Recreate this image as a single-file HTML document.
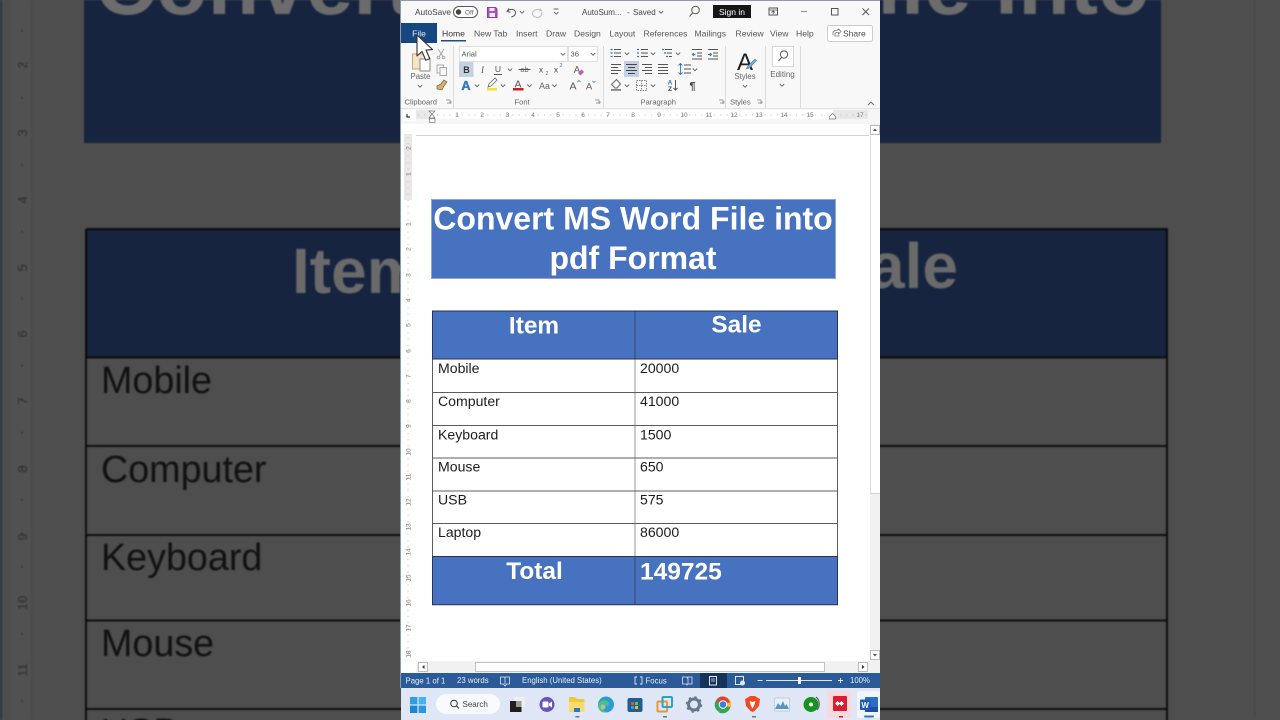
<!DOCTYPE html>
<html><head><meta charset="utf-8"><title>Convert MS Word File into pdf Format</title>
<style>
html,body{margin:0;padding:0;width:1280px;height:720px;overflow:hidden;background:#4d4d4d}
svg{display:block;position:absolute;left:0;top:0;filter:blur(.3px)}
text{font-family:"Liberation Sans",Arial,sans-serif}
.u{font-size:8.5px;fill:#444}
.t{font-size:8.6px;fill:#555}
.s{font-size:7.8px;fill:#e8eef7}
.g{font-size:7.6px;fill:#666}
.r{font-size:6.5px;fill:#777;text-anchor:middle}
.d{font-size:14.1px;fill:#1c1c1c}
.h{font-size:24.4px;fill:#fff;font-weight:bold;text-anchor:middle}
.bt{font-size:37.7px;fill:#111}
.ln{stroke:#6b6b6b;stroke-width:1;fill:none}
.ch{stroke:#666;stroke-width:.9;fill:none}
.b{stroke:#555;stroke-width:1;fill:none}
.bl{stroke:#4a87b8;stroke-width:1;fill:none}
</style></head><body>
<svg width="1280" height="720" viewBox="0 0 1280 720" xmlns="http://www.w3.org/2000/svg">
<defs><path id="c" class="ch" d="M-2.2-1 0 1.2 2.2-1"/></defs>

<!-- dim background -->
<rect width="1280" height="720" fill="#4e4e4e"/>
<g style="filter:blur(.7px)">
<rect x="0" y="0" width="2" height="720" fill="#2b383e"/>
<rect x="11" y="0" width="21" height="720" fill="#515151"/>
<rect x="31" y="0" width="1" height="720" fill="#494949"/>
<rect x="1254" y="0" width="1" height="716" fill="#424242"/>
<g font-size="13" fill="#2e2e2e" text-anchor="middle">
<text transform="translate(27,65) rotate(-90)">2</text><text transform="translate(27,133) rotate(-90)">3</text><text transform="translate(27,200) rotate(-90)">4</text><text transform="translate(27,268) rotate(-90)">5</text><text transform="translate(27,334) rotate(-90)">6</text><text transform="translate(27,401) rotate(-90)">7</text><text transform="translate(27,469) rotate(-90)">8</text><text transform="translate(27,537) rotate(-90)">9</text><text transform="translate(27,603) rotate(-90)">10</text><text transform="translate(27,670) rotate(-90)">11</text>
</g>
<path d="M22 30V720" stroke="#2e2e2e" stroke-width="1.5" stroke-dasharray="1.5 32" fill="none"/>
<rect x="84" y="0" width="1077" height="143" fill="#17243f"/>
<text x="95" y="14" font-size="84.5" font-weight="bold" fill="#6c6c6c">Convert MS Word File into</text>
<rect x="86" y="229" width="1081" height="128" fill="#17243f"/>
<text x="292" y="293" font-size="64" font-weight="bold" fill="#6a6a6a">Item</text>
<text x="958" y="288" font-size="64" font-weight="bold" fill="#6a6a6a" text-anchor="end">Sale</text>
<path d="M86 229H1167V730M86 229V730M86 357.500H1167M86 446H1167M86 535H1167M86 620.500H1167M86 709H1167" stroke="#060606" stroke-width="1.800" fill="none"/>
<text class="bt" x="101" y="393">Mobile</text>
<text class="bt" x="101" y="482">Computer</text>
<text class="bt" x="101" y="570">Keyboard</text>
<text class="bt" x="101" y="656">Mouse</text>
<text class="bt" x="101" y="745">USB</text>
</g>

<!-- window -->
<rect x="401" y="0" width="479" height="720" fill="#fff"/>
<rect x="400" y="0" width="1" height="688" fill="#8d99a8"/>
<rect x="401" y="0" width="479" height="1" fill="#8f9aa6"/>
<rect x="401" y="1" width="479" height="107" fill="#f8f8f8"/>

<!-- title bar -->
<text class="u" x="415" y="15" style="font-size:8.300px">AutoSave</text>
<rect x="453.500" y="6.500" width="24" height="11" rx="5.500" fill="#fff" stroke="#555"/>
<circle cx="458.500" cy="12" r="2.700" fill="#444"/>
<text x="465" y="14.600" font-size="6.500" fill="#666">Off</text>
<path d="M487.500 7.500h8l1.500 1.500v8.500h-9.500z" fill="#a656b9" stroke="#8c3fa3"/><rect x="489.500" y="8" width="5" height="3" fill="#f3e6f6"/><rect x="489.500" y="13" width="5.500" height="4" fill="#f3e6f6"/>
<path d="M509 8.500 507 11.500l3.500.7M507.500 11c3-3 8-1.500 8 1.800 0 2.400-2 3.700-4.200 4.200" class="b"/>
<use href="#c" x="522" y="12"/>
<path d="M540 8.500 541.800 11M541 11c-3-3-8.500-1-8.500 2.500 0 3 4 4.700 7 3.500 2-1 2.500-3 2-4.500" stroke="#b9b9b9" fill="none"/>
<path d="M553.500 9h5M554 12l2.200 2.200 2.200-2.200" class="ch"/>
<text class="u" x="582" y="15" style="font-size:8px">AutoSum...</text><text class="u" x="627" y="15" style="font-size:8px">-</text><text class="u" x="633" y="15" style="font-size:8px">Saved</text>
<use href="#c" x="661" y="12"/>
<circle cx="695.500" cy="10" r="3.800" class="b"/><path d="M692.500 13l-3 3.500" class="b"/>
<rect x="713" y="5" width="38" height="13" fill="#161616"/>
<text x="732" y="15" font-size="8.500" fill="#fff" text-anchor="middle">Sign in</text>
<rect x="769" y="8" width="8.500" height="7" class="b"/><path d="M769 10h8.500M773.200 14v-3M771.500 12.500l1.700-1.700 1.700 1.700" stroke="#555" stroke-width=".8" fill="none"/>
<path d="M801 11.500h6" stroke="#999" stroke-width="1.200"/>
<rect x="831.500" y="8.500" width="6.500" height="6.500" class="b"/>
<path d="M862.500 8.500l6.500 6.500M869 8.500l-6.500 6.500" class="b"/>

<!-- tabs -->
<rect x="401" y="23" width="36" height="20" fill="#17477f"/>
<text x="419" y="36.500" font-size="8.500" fill="#e6edf6" text-anchor="middle">File</text>
<text class="t" x="442" y="36.500" style="fill:#333">Home</text>
<rect x="441" y="40" width="25" height="1.500" fill="#1f4e87"/>
<text class="t" x="474" y="36.500">New Tab</text>
<text class="t" x="516" y="36.500">Insert</text>
<text class="t" x="546" y="36.500">Draw</text>
<text class="t" x="574" y="36.500">Design</text>
<text class="t" x="609.500" y="36.500">Layout</text>
<text class="t" x="643.500" y="36.500">References</text>
<text class="t" x="694.500" y="36.500">Mailings</text>
<text class="t" x="735.500" y="36.500">Review</text>
<text class="t" x="770" y="36.500">View</text>
<text class="t" x="796" y="36.500">Help</text>
<rect x="827.500" y="25.500" width="45" height="16" rx="2" fill="#fff" stroke="#ccc"/>
<path d="M833 35v-3l2-1.500h2l1.500-1.500 2.500 2.500-2.500 2.500v-1.500h-2l-1.500 1v2.500h4v-1" stroke="#777" stroke-width=".8" fill="none"/>
<text x="843" y="36.500" font-size="8.500" fill="#444">Share</text>

<!-- clipboard group -->
<rect x="412.500" y="54" width="12" height="15" fill="#f1e4c8" stroke="#c9a86a"/>
<rect x="420" y="59" width="10" height="12" fill="#fff" stroke="#888"/>
<text class="g" x="410.500" y="79" style="font-size:7.800px">Paste</text>
<use href="#c" x="420" y="86"/>
<path d="M438 49l4.500 7M444 49l-4.500 7" stroke="#aaa" fill="none"/><circle cx="438.500" cy="57.500" r="1.300" stroke="#aaa" fill="none"/><circle cx="443.500" cy="57.500" r="1.300" stroke="#aaa" fill="none"/>
<rect x="437" y="65" width="6.500" height="8" fill="none" stroke="#aaa"/><rect x="440" y="67.500" width="6.500" height="8" fill="#f8f8f8" stroke="#aaa"/>
<path d="M437 86l4-2 3-4 3 2-3 4-2 4-5-1z" fill="#e0ac5b" stroke="#666" stroke-width=".7"/>
<text class="g" x="404.500" y="104.500">Clipboard</text>
<path d="M446 100h4v4M447 103h4v-2" stroke="#888" stroke-width=".7" fill="none"/>
<rect x="453" y="46" width="1" height="62" fill="#dcdcdc"/>

<!-- font group -->
<rect x="459.500" y="46.500" width="108" height="15" fill="#fff" stroke="#e0e0e0"/>
<text x="461.500" y="56.500" font-size="7.600" fill="#555">Arial</text>
<use href="#c" x="563" y="54"/>
<rect x="568.500" y="46.500" width="29" height="15" fill="#fff" stroke="#e0e0e0"/>
<text x="570.500" y="56.500" font-size="7.600" fill="#555">36</text>
<use href="#c" x="593" y="54"/>
<rect x="459" y="62" width="14.500" height="15" fill="#c4d1e4"/>
<text x="466.500" y="73" font-size="9" font-weight="bold" fill="#333" text-anchor="middle">B</text>
<text x="482.500" y="73" font-size="9" font-style="italic" fill="#555" text-anchor="middle" style="font-family:'Liberation Serif',serif">I</text>
<text x="498" y="72" font-size="8.500" fill="#555" text-anchor="middle">U</text><path d="M494 74.500h8" stroke="#555"/>
<use href="#c" x="510" y="69.500"/>
<text x="524.500" y="72" font-size="7.500" fill="#666" text-anchor="middle">ab</text><path d="M518.500 69.500h12" stroke="#555"/>
<text x="541" y="72.500" font-size="8.500" fill="#444" text-anchor="middle">x</text><text x="545.500" y="75" font-size="5" fill="#3a78a8">2</text>
<text x="556" y="72.500" font-size="8.500" fill="#444" text-anchor="middle">x</text><text x="559.500" y="67" font-size="5" fill="#3a78a8">2</text>
<text x="577" y="73" font-size="10" fill="#666" text-anchor="middle">A</text><path d="M578 73l3.500-3.500 2.500 2.500-3.500 3.500z" fill="#b85cc4"/>
<text x="466" y="90" font-size="13" font-weight="bold" fill="#2f7fc4" stroke="#1e5a93" stroke-width=".3" text-anchor="middle">A</text>
<use href="#c" x="477" y="85.500"/>
<path d="M488 87l1-3 6-6 2 2-6 6z" fill="#fff" stroke="#666" stroke-width=".8"/><rect x="487" y="88" width="10" height="2.500" fill="#f5e533"/>
<use href="#c" x="503" y="85.500"/>
<text x="518" y="87.500" font-size="10.500" fill="#555" text-anchor="middle">A</text><rect x="513" y="88" width="10.500" height="2.500" fill="#c8202a"/>
<use href="#c" x="529.500" y="85.500"/>
<text x="544.500" y="89" font-size="8.800" fill="#666" text-anchor="middle">Aa</text>
<use href="#c" x="554.500" y="85.500"/>
<text x="573" y="89.500" font-size="10.500" fill="#555" text-anchor="middle">A</text><path d="M577.500 82l1.500-1.500 1.500 1.500" stroke="#4a87b8" stroke-width=".8" fill="none"/>
<text x="589" y="89.500" font-size="9.500" fill="#555" text-anchor="middle">A</text><path d="M592.500 81l1.500 1.500 1.500-1.500" stroke="#4a87b8" stroke-width=".8" fill="none"/>
<text class="g" x="514.500" y="104.500">Font</text>
<path d="M595 100h4v4M596 103h4v-2" stroke="#888" stroke-width=".7" fill="none"/>
<rect x="603" y="46" width="1" height="62" fill="#dcdcdc"/>

<!-- paragraph group -->
<path d="M614 49.500h7M614 53h7M614 56.500h7" class="b"/><path d="M610.500 49.500h2M610.500 53h2M610.500 56.500h2" stroke="#2a78b8" stroke-width="1.300"/>
<use href="#c" x="627" y="53.500"/>
<path d="M641 49.500h7M641 53h7M641 56.500h7" class="b"/><path d="M637 49.500h2M637 53h2M637 56.500h2" stroke="#2a78b8" stroke-width="1.300"/>
<use href="#c" x="653" y="53.500"/>
<path d="M665 49.500h7M667 53h5M669 56.500h3" class="b"/><path d="M662 49.500h2M664 53h2M666 56.500h2" stroke="#2a78b8" stroke-width="1.300"/>
<use href="#c" x="678" y="53.500"/>
<path d="M692 49.500h10M697 53h5M697 56h5M692 59h10" class="b"/><path d="M695.500 54.500h-3M694 53l-1.500 1.500 1.500 1.500" stroke="#2a78b8" fill="none"/>
<path d="M708 49.500h10M713 53h5M713 56h5M708 59h10" class="b"/><path d="M708 54.500h3M710 53l1.500 1.500-1.500 1.500" stroke="#2a78b8" fill="none"/>
<path d="M611 64.500h10M611 67.500h7M611 70.500h10M611 73.500h7" class="b"/>
<rect x="624" y="61" width="15" height="16" fill="#c4d1e4"/>
<path d="M626 64.500h11M628 67.500h7M626 70.500h11M628 73.500h7" stroke="#444" fill="none"/>
<path d="M642 64.500h10M645 67.500h7M642 70.500h10M645 73.500h7" class="b"/>
<path d="M658 64.500h10M658 67.500h10M658 70.500h10M658 73.500h10" class="b"/>
<path d="M684 65h7M684 69h7M684 73h7" class="b"/><path d="M680.500 63.500v11M678.500 65.500l2-2 2 2M678.500 72.500l2 2 2-2" stroke="#2a78b8" stroke-width=".9" fill="none"/>
<use href="#c" x="695" y="69.500"/>
<path d="M615 88l-3.500-3.500 5-5 4 4.500-3.500 4z" fill="none" stroke="#666"/><rect x="611" y="89" width="10" height="1.800" fill="#888"/>
<use href="#c" x="627" y="85.500"/>
<rect x="636.500" y="80.500" width="10" height="10" fill="none" stroke="#888" stroke-dasharray="1.500 1"/><path d="M641.500 80.500v10M636.500 85.500h10" stroke="#888" stroke-dasharray="1.500 1"/>
<use href="#c" x="653" y="85.500"/>
<text x="670" y="84.500" font-size="6.500" font-weight="bold" fill="#2a78b8" text-anchor="middle">A</text><text x="670" y="91" font-size="6.500" font-weight="bold" fill="#444" text-anchor="middle">Z</text>
<path d="M675.500 80v10M673.500 88l2 2 2-2" class="b"/>
<text x="692.500" y="89.500" font-size="11" font-weight="bold" fill="#444" text-anchor="middle">¶</text>
<text class="g" x="640.500" y="104.500">Paragraph</text>
<path d="M719 100h4v4M720 103h4v-2" stroke="#888" stroke-width=".7" fill="none"/>
<rect x="725" y="46" width="1" height="62" fill="#dcdcdc"/>

<!-- styles / editing -->
<text x="745" y="70" font-size="24" fill="#222" text-anchor="middle">A</text>
<path d="M746 69l2-3 7-7 1.500 1.500-7 7.500z" fill="#79abd3" stroke="#4f7ea8" stroke-width=".6"/>
<text class="g" x="745" y="79" text-anchor="middle" style="font-size:7.800px">Styles</text>
<use href="#c" x="745" y="86"/>
<text class="g" x="730" y="104.500">Styles</text>
<path d="M757 100h4v4M758 103h4v-2" stroke="#888" stroke-width=".7" fill="none"/>
<rect x="765" y="46" width="1" height="62" fill="#dcdcdc"/>
<rect x="772.500" y="46.500" width="21" height="20" fill="#fff" stroke="#d8d8d8"/>
<circle cx="784" cy="54.500" r="3.600" class="b"/><path d="M781.500 57.500l-3 3.500" class="b"/>
<text class="g" x="782.500" y="77" text-anchor="middle" style="font-size:8px">Editing</text>
<use href="#c" x="782" y="85"/>
<rect x="800" y="46" width="1" height="62" fill="#dcdcdc"/>
<path d="M868 105l3-3 3 3" class="ch"/>

<!-- horizontal ruler -->
<rect x="401" y="108" width="479" height="16" fill="#f6f6f6"/>
<rect x="401" y="108" width="479" height="1" fill="#e2e2e2"/>
<rect x="416" y="110" width="452" height="9" fill="#fff"/>
<rect x="416" y="110" width="16" height="9" fill="#e8e8e8"/>
<rect x="833" y="110" width="35" height="9" fill="#e8e8e8"/>
<rect x="403" y="110" width="13" height="11" fill="#fff"/>
<path d="M407 114v3h3" stroke="#333" stroke-width="1.200" fill="none"/>
<path d="M418 115H868" stroke="#bbb" stroke-width="1" stroke-dasharray="1 5.300" fill="none"/>
<g>
<text class="r" x="457" y="117">1</text><text class="r" x="482" y="117">2</text><text class="r" x="507.500" y="117">3</text><text class="r" x="533" y="117">4</text><text class="r" x="558" y="117">5</text><text class="r" x="583" y="117">6</text><text class="r" x="608" y="117">7</text><text class="r" x="633" y="117">8</text><text class="r" x="659" y="117">9</text><text class="r" x="684" y="117">10</text><text class="r" x="709" y="117">11</text><text class="r" x="734" y="117">12</text><text class="r" x="759" y="117">13</text><text class="r" x="784" y="117">14</text><text class="r" x="810" y="117">15</text><text class="r" x="860" y="117">17</text>
</g>
<path d="M429 111h6l-3 3 3 4h-6l3-4z" fill="#fff" stroke="#777" stroke-width=".7"/><rect x="429.500" y="118.500" width="5.500" height="4" fill="#fff" stroke="#777" stroke-width=".7"/>
<path d="M829.500 119v-2.500l3-3 3 3v2.500z" fill="#fff" stroke="#777" stroke-width=".7"/>

<!-- document area -->
<rect x="401" y="124" width="469" height="549" fill="#fff"/>
<rect x="416" y="135" width="453" height="1" fill="#d4d4d4"/>
<!-- vertical ruler -->
<rect x="404" y="134" width="8" height="66" fill="#e8e8e8"/>
<path d="M408 137V660" stroke="#c4c4c4" stroke-width="1.200" stroke-dasharray="1 5.300" fill="none"/>
<g>
<text class="r" transform="translate(410.500,148) rotate(-90)">2</text><text class="r" transform="translate(410.500,174) rotate(-90)">1</text><text class="r" transform="translate(410.500,224) rotate(-90)">1</text><text class="r" transform="translate(410.500,249) rotate(-90)">2</text><text class="r" transform="translate(410.500,275) rotate(-90)">3</text><text class="r" transform="translate(410.500,300) rotate(-90)">4</text><text class="r" transform="translate(410.500,325) rotate(-90)">5</text><text class="r" transform="translate(410.500,351) rotate(-90)">6</text><text class="r" transform="translate(410.500,376) rotate(-90)">7</text><text class="r" transform="translate(410.500,401) rotate(-90)">8</text><text class="r" transform="translate(410.500,426) rotate(-90)">9</text><text class="r" transform="translate(410.500,452) rotate(-90)">10</text><text class="r" transform="translate(410.500,477) rotate(-90)">11</text><text class="r" transform="translate(410.500,502) rotate(-90)">12</text><text class="r" transform="translate(410.500,527) rotate(-90)">13</text><text class="r" transform="translate(410.500,552) rotate(-90)">14</text><text class="r" transform="translate(410.500,578) rotate(-90)">15</text><text class="r" transform="translate(410.500,603) rotate(-90)">16</text><text class="r" transform="translate(410.500,628) rotate(-90)">17</text><text class="r" transform="translate(410.500,654) rotate(-90)">18</text>
</g>

<!-- title block -->
<rect x="431.500" y="199.500" width="404" height="79" fill="#4772c0" stroke="#93a5c8"/>
<text x="633" y="229.500" font-size="32" font-weight="bold" fill="#fff" text-anchor="middle">Convert MS Word File into</text>
<text x="633" y="269" font-size="32" font-weight="bold" fill="#fff" text-anchor="middle">pdf Format</text>

<!-- table -->
<rect x="432" y="311" width="406" height="48" fill="#4772c0"/>
<rect x="432" y="557" width="406" height="48" fill="#4772c0"/>
<path d="M635 359V557" stroke="#b8b8b8" stroke-width="1.500" fill="none"/>
<path d="M635 311V359M635 557V605" stroke="#34466e" stroke-width="1" fill="none"/>
<path d="M432.500 359V557M837.500 359V557M432 392.500H838M432 425.500H838M432 458H838M432 491H838M432 523.500H838" stroke="#5c5c5c" stroke-width="1" fill="none"/>
<path d="M432 311H838M432 359H838M432 556.500H838M432 604.700H838M432.500 311V359M837.500 311V359M432.500 557V605M837.500 557V605" stroke="#2a3350" stroke-width="1" fill="none"/>
<text class="h" x="534" y="333.500">Item</text>
<text class="h" x="736.500" y="332.500">Sale</text>
<text class="d" x="438" y="373">Mobile</text><text class="d" x="640" y="373">20000</text>
<text class="d" x="438" y="406">Computer</text><text class="d" x="640" y="406">41000</text>
<text class="d" x="438" y="439.500">Keyboard</text><text class="d" x="640" y="439.500">1500</text>
<text class="d" x="438" y="471.500">Mouse</text><text class="d" x="640" y="471.500">650</text>
<text class="d" x="438" y="504.500">USB</text><text class="d" x="640" y="504.500">575</text>
<text class="d" x="438" y="537">Laptop</text><text class="d" x="640" y="537">86000</text>
<text class="h" x="534.500" y="579">Total</text>
<text x="640" y="579.500" font-size="24.500" font-weight="bold" fill="#fff">149725</text>

<!-- vertical scrollbar -->
<rect x="870" y="124" width="10" height="549" fill="#f1f1f1"/>
<rect x="870.500" y="125.500" width="9" height="9" fill="#fff" stroke="#bbb"/><path d="M873 131l2-2.500 2 2.500z" fill="#555"/>
<rect x="870" y="135" width="10" height="358" fill="#fff"/><rect x="870" y="135" width="1" height="358" fill="#e0e0e0"/><rect x="870" y="493" width="10" height="1" fill="#d0d0d0"/>
<rect x="870.500" y="650.500" width="9" height="9" fill="#fff" stroke="#bbb"/><path d="M873 654l2 2.500 2-2.500z" fill="#555"/>
<!-- horizontal scrollbar -->
<rect x="416" y="661" width="454" height="12" fill="#f1f1f1"/>
<rect x="418.500" y="662.500" width="9" height="9" fill="#fff" stroke="#bbb"/><path d="M424.500 665v4l-2.500-2z" fill="#333"/>
<rect x="475.500" y="662.500" width="349" height="9" fill="#fff" stroke="#c4c4c4"/>
<rect x="858.500" y="662.500" width="9" height="9" fill="#fff" stroke="#bbb"/><path d="M862 665v4l2.500-2z" fill="#333"/>

<!-- status bar -->
<rect x="401" y="673" width="479" height="15" fill="#2b5a98"/>
<text class="s" x="405.500" y="683.300">Page 1 of 1</text>
<text class="s" x="457" y="683">23 words</text>
<path d="M500.500 677h4l.5 1 .5-1h4v7h-3l-1.500 2-1.500-2h-3zM505 678v6" stroke="#dfe7f2" stroke-width=".8" fill="none"/>
<text class="s" x="522" y="683">English (United States)</text>
<path d="M637 677h-2v7h2M640 677h2v7h-2" stroke="#dfe7f2" stroke-width=".9" fill="none"/>
<text class="s" x="645.500" y="683.300">Focus</text>
<path d="M682.500 677h4.500l.5 1 .5-1h4v7h-4.500l-.5 1-.5-1h-4zM688 678v6" stroke="#dfe7f2" stroke-width=".8" fill="none"/>
<rect x="700" y="673" width="27" height="15" fill="#16335c"/>
<rect x="709.500" y="676.500" width="7" height="8.500" fill="none" stroke="#dfe7f2"/><path d="M711 679h4M711 681h4" stroke="#dfe7f2" stroke-width=".7"/>
<rect x="735.500" y="676.500" width="8" height="8" fill="none" stroke="#dfe7f2"/><circle cx="742.500" cy="683" r="2.500" fill="#dfe7f2"/>
<path d="M757.500 680.500h5M766 680.500h66M838 680.500h5M840.500 678v5" stroke="#dfe7f2" stroke-width=".9" fill="none"/>
<rect x="798" y="677" width="3" height="7" fill="#fff"/>
<text class="s" x="850" y="683">100%</text>

<!-- taskbar -->
<rect x="401" y="688" width="479" height="32" fill="#dfe6f5"/>
<rect x="410" y="697" width="7.400" height="7.400" fill="#31a0e3"/><rect x="418.600" y="697" width="7.400" height="7.400" fill="#46b3ee"/><rect x="410" y="705.600" width="7.400" height="7.400" fill="#1c86d3"/><rect x="418.600" y="705.600" width="7.400" height="7.400" fill="#2a98e0"/>
<rect x="436" y="694" width="64" height="20" rx="10" fill="#f7f9fd"/>
<circle cx="454" cy="703.500" r="3.300" fill="none" stroke="#333"/><path d="M456.500 706l2.500 2.500" stroke="#333"/>
<text x="462.500" y="707" font-size="8" fill="#444">Search</text>
<rect x="514" y="697" width="11" height="10" fill="#efefef"/><rect x="510" y="701" width="11.500" height="11" fill="#1e1e1e"/><rect x="516" y="701" width="5.500" height="6" fill="#999"/>
<circle cx="547" cy="704.500" r="7.500" fill="#6a54b8"/><rect x="542.500" y="701.500" width="6" height="6" rx="1" fill="#fff"/><path d="M549 703.500l3-2v6l-3-2z" fill="#fff"/>
<path d="M569 697h6l2 2h7.500v13H569z" fill="#f2c83e"/><rect x="569" y="702" width="15.500" height="10" fill="#f9dc6b"/><rect x="574" y="708" width="6" height="4" fill="#2a78c0"/>
<rect x="575.500" y="716" width="4" height="1.500" fill="#777"/>
<circle cx="606" cy="704.500" r="8" fill="#2c9dd3"/><path d="M598 705c2-6 9-6 11-2 1 3-3 3-5 3-2 0-2 5 3 6-5 2-9-2-9-7z" fill="#4bc17c"/><circle cx="603" cy="707" r="2.500" fill="#b6b6b6"/>
<rect x="627.500" y="698" width="15" height="14" rx="2" fill="#1f5f8e"/><rect x="631" y="702" width="3" height="3" fill="#e8502f"/><rect x="635" y="702" width="3" height="3" fill="#7db93a"/><rect x="631" y="706" width="3" height="3" fill="#2a9fdf"/><rect x="635" y="706" width="3" height="3" fill="#f6b62a"/>
<rect x="657.500" y="701.500" width="9.500" height="10" rx="1" fill="none" stroke="#e39a3a" stroke-width="2"/><rect x="662.500" y="697" width="9.500" height="10" rx="1" fill="none" stroke="#29a3c4" stroke-width="2"/>
<rect x="663" y="716" width="4" height="1.500" fill="#777"/>
<circle cx="694" cy="704.500" r="5.500" fill="none" stroke="#66788f" stroke-width="3"/><circle cx="694" cy="704.500" r="7.500" fill="none" stroke="#66788f" stroke-width="1.500" stroke-dasharray="2.500 3.400"/>
<circle cx="723" cy="704.500" r="8" fill="#dc4437"/><path d="M723 704.500l7 3.500a8 8 0 0 1-11 4.500z" fill="#2fa853"/><path d="M723 704.500l-4 7.500a8 8 0 0 1-3-11.500z" fill="#2fa853"/><path d="M723 696.500a8 8 0 0 1 7.500 11l-7.500-3z" fill="#f6c02c"/><path d="M723 696.500a8 8 0 0 0-7 4l4 3 10-1a8 8 0 0 0-7-6z" fill="#dc4437"/><circle cx="723" cy="704.500" r="3.800" fill="#3f7fdc" stroke="#fff" stroke-width="1"/>
<path d="M747 698l3-2h5l3 2 2 1-1 7-4.500 5-2 1-2-1-4.500-5-1-7z" fill="#ef4a22"/><path d="M749.500 701l3 1 3-1-1.500 5-1.500 2.500-1.500-2.500z" fill="#fff"/>
<rect x="752" y="716" width="4" height="1.500" fill="#777"/>
<rect x="774.500" y="698" width="15" height="13" fill="#e8f1f8" stroke="#a9bfd2" stroke-width=".6"/><path d="M775 709l3-6 2.500 3 2.500-5 2 5 1.500-2 2.500 5z" fill="#5e95c5"/>
<circle cx="811" cy="704.500" r="7.500" fill="#15931f"/><circle cx="811" cy="704.500" r="2" fill="#fff"/><path d="M816 697a9 9 0 0 1 1 13" fill="none" stroke="#666" stroke-width="1.200"/>
<rect x="827" y="691" width="24" height="27" rx="2" fill="#f7d9de"/><rect x="833" y="696" width="14" height="15" rx="1" fill="#d81e32"/><path d="M835 703.500l2.500-2.500 2 2 2-2 2.500 2.500-2.500 2.500-2-2-2 2z" fill="#fff"/>
<rect x="839" y="716" width="4" height="1.500" fill="#c81e30"/>
<rect x="857" y="691" width="23" height="27" rx="2" fill="#f0f4fb"/>
<rect x="865" y="697" width="13" height="15" rx="1" fill="#2b6fc4"/><rect x="865" y="707" width="13" height="5" fill="#1c4f9c"/><rect x="860" y="699.500" width="10.500" height="10.500" rx="1" fill="#185abd"/>
<text x="865.200" y="708" font-size="8" font-weight="bold" fill="#fff" text-anchor="middle">W</text>
<rect x="864" y="715.500" width="10" height="2" rx="1" fill="#2a78c0"/>

<!-- cursor -->
<path d="M417 35v21l5-4.500 3.800 8.800 4-1.700-3.800-8.500 6.600-.5z" fill="#fff" stroke="#333" stroke-width="1.100" stroke-linejoin="round"/>
</svg>
</body></html>
